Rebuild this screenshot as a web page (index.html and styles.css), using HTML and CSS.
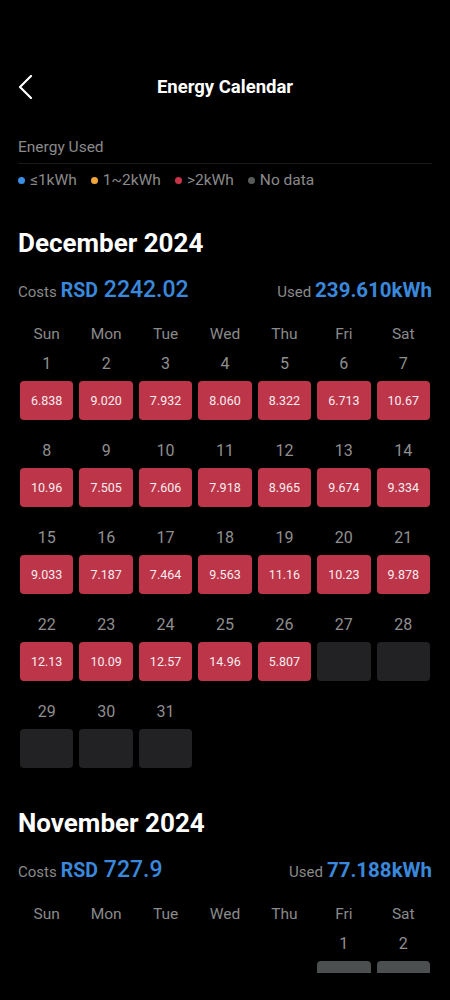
FILE: index.html
```html
<!DOCTYPE html>
<html lang="en">
<head>
    <meta charset="UTF-8">
    <meta name="viewport" content="width=device-width, initial-scale=1.0">
    <title>Energy Calendar</title>
    <link rel="stylesheet" href="styles.css">
</head>
<body>

<div class="topbar">
    <svg class="back" width="24" height="24" viewBox="0 0 24 24">
        <polyline points="16,1 5,12 16,23" fill="none" stroke="#fff" stroke-width="2.2" stroke-linecap="round" stroke-linejoin="round"/>
    </svg>
    <h1>Energy Calendar</h1>
</div>

<div class="page">
    <div class="legend-title">Energy Used</div>
    <div class="legend">
        <span><i class="dot blue"></i>≤1kWh</span>
        <span><i class="dot orange"></i>1~2kWh</span>
        <span><i class="dot red"></i>&gt;2kWh</span>
        <span><i class="dot gray"></i>No data</span>
    </div>

    <!-- December -->
    <section class="month">
        <h2>December 2024</h2>
        <div class="summary">
            <div><span class="label">Costs</span> <span class="cur">RSD</span> <span class="amount">2242.02</span></div>
            <div><span class="label">Used</span> <span class="kwh">239.610kWh</span></div>
        </div>
        <div class="weekdays">
            <span>Sun</span><span>Mon</span><span>Tue</span><span>Wed</span><span>Thu</span><span>Fri</span><span>Sat</span>
        </div>
        <div class="days">
            <div class="day"><div class="num">1</div><div class="cell high">6.838</div></div>
            <div class="day"><div class="num">2</div><div class="cell high">9.020</div></div>
            <div class="day"><div class="num">3</div><div class="cell high">7.932</div></div>
            <div class="day"><div class="num">4</div><div class="cell high">8.060</div></div>
            <div class="day"><div class="num">5</div><div class="cell high">8.322</div></div>
            <div class="day"><div class="num">6</div><div class="cell high">6.713</div></div>
            <div class="day"><div class="num">7</div><div class="cell high">10.67</div></div>

            <div class="day"><div class="num">8</div><div class="cell high">10.96</div></div>
            <div class="day"><div class="num">9</div><div class="cell high">7.505</div></div>
            <div class="day"><div class="num">10</div><div class="cell high">7.606</div></div>
            <div class="day"><div class="num">11</div><div class="cell high">7.918</div></div>
            <div class="day"><div class="num">12</div><div class="cell high">8.965</div></div>
            <div class="day"><div class="num">13</div><div class="cell high">9.674</div></div>
            <div class="day"><div class="num">14</div><div class="cell high">9.334</div></div>

            <div class="day"><div class="num">15</div><div class="cell high">9.033</div></div>
            <div class="day"><div class="num">16</div><div class="cell high">7.187</div></div>
            <div class="day"><div class="num">17</div><div class="cell high">7.464</div></div>
            <div class="day"><div class="num">18</div><div class="cell high">9.563</div></div>
            <div class="day"><div class="num">19</div><div class="cell high">11.16</div></div>
            <div class="day"><div class="num">20</div><div class="cell high">10.23</div></div>
            <div class="day"><div class="num">21</div><div class="cell high">9.878</div></div>

            <div class="day"><div class="num">22</div><div class="cell high">12.13</div></div>
            <div class="day"><div class="num">23</div><div class="cell high">10.09</div></div>
            <div class="day"><div class="num">24</div><div class="cell high">12.57</div></div>
            <div class="day"><div class="num">25</div><div class="cell high">14.96</div></div>
            <div class="day"><div class="num">26</div><div class="cell high">5.807</div></div>
            <div class="day"><div class="num">27</div><div class="cell future"></div></div>
            <div class="day"><div class="num">28</div><div class="cell future"></div></div>

            <div class="day"><div class="num">29</div><div class="cell future"></div></div>
            <div class="day"><div class="num">30</div><div class="cell future"></div></div>
            <div class="day"><div class="num">31</div><div class="cell future"></div></div>
        </div>
    </section>

    <!-- November -->
    <section class="month">
        <h2>November 2024</h2>
        <div class="summary">
            <div><span class="label">Costs</span> <span class="cur">RSD</span> <span class="amount">727.9</span></div>
            <div><span class="label">Used</span> <span class="kwh">77.188kWh</span></div>
        </div>
        <div class="weekdays">
            <span>Sun</span><span>Mon</span><span>Tue</span><span>Wed</span><span>Thu</span><span>Fri</span><span>Sat</span>
        </div>
        <div class="days">
            <div></div><div></div><div></div><div></div><div></div>
            <div class="day"><div class="num">1</div><div class="cell nodata"></div></div>
            <div class="day"><div class="num">2</div><div class="cell nodata"></div></div>
        </div>
    </section>
</div>

<div class="navbar"></div>

</body>
</html>
```

FILE: styles.css
```css
html, body {
    margin: 0;
    background: #000;
    color: #fff;
    font-family: Roboto, "Noto Sans", Arial, sans-serif;
}
body {
    height: 1000px;
    overflow: hidden;
}
.topbar {
    position: relative;
    height: 50px;
    margin-top: 62px;
    display: flex;
    align-items: center;
    justify-content: center;
}
.topbar .back {
    position: absolute;
    left: 15px;
    top: 13px;
}
.topbar h1 {
    margin: 0;
    font-size: 18.5px;
    font-weight: 700;
}
.page {
    padding: 0 18px;
}
.legend-title {
    margin-top: 25px;
    padding-bottom: 6px;
    border-bottom: 1px solid #1a1a1a;
    font-size: 15.5px;
    line-height: 20px;
    color: #8a8a8a;
}
.legend {
    margin-top: 6px;
    display: flex;
    gap: 14px;
    font-size: 15.5px;
    line-height: 20px;
    color: #8a8a8a;
}
.legend span {
    display: flex;
    align-items: center;
}
.dot {
    display: inline-block;
    width: 7px;
    height: 7px;
    border-radius: 50%;
    margin-right: 5px;
}
.dot.blue { background: #3a8ee6; }
.dot.orange { background: #f3a73b; }
.dot.red { background: #c9344b; }
.dot.gray { background: #595b5b; }

.month {
    margin-top: 37px;
    padding-bottom: 2px;
}
.month h2 {
    margin: 0;
    font-size: 26px;
    line-height: 32px;
    font-weight: 700;
}
.summary {
    margin-top: 17px;
    display: flex;
    justify-content: space-between;
    align-items: baseline;
    line-height: 28px;
    color: #3a88dc;
}
.summary .label {
    font-size: 15px;
    color: #8a8a8a;
}
.summary .cur {
    font-size: 19.5px;
    font-weight: 700;
    margin-right: 2px;
}
.summary .amount {
    font-size: 23px;
    font-weight: 500;
}
.summary .kwh {
    font-size: 20.5px;
    font-weight: 700;
}
.weekdays, .days {
    display: grid;
    grid-template-columns: repeat(7, 1fr);
    column-gap: 6px;
    margin: 0 2px;
}
.weekdays {
    margin-top: 18px;
    font-size: 15.5px;
    line-height: 20px;
    color: #8a8a8a;
    text-align: center;
}
.days {
    margin-top: 10px;
    row-gap: 21px;
}
.day .num {
    text-align: center;
    font-size: 16px;
    line-height: 20px;
    color: #8f8f8f;
    margin-bottom: 7px;
}
.cell {
    height: 39px;
    border-radius: 4px;
    display: flex;
    align-items: center;
    justify-content: center;
    font-size: 12.5px;
    font-weight: 400;
    color: #f6eef0;
}
.cell.high { background: #bd3549; }
.cell.future { background: #222224; }
.cell.nodata { background: #4b4f4f; }
.navbar {
    position: fixed;
    left: 0;
    right: 0;
    bottom: 0;
    height: 27px;
    background: #000;
}
```
